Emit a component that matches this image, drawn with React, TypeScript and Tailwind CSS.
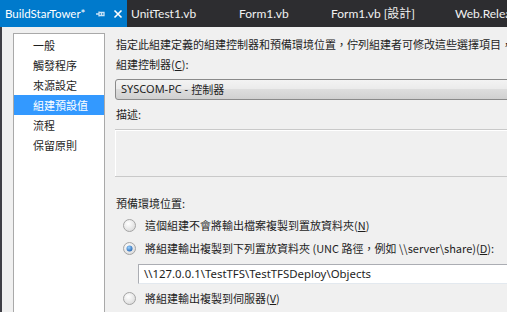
import React from 'react';

const cjk = "font-['Noto_Sans_CJK_TC','Noto_Sans',sans-serif]";

const Radio = ({ checked }: { checked?: boolean }) => (
    <svg width="13" height="13" viewBox="0 0 13 13" className="shrink-0">
        <defs>
            <radialGradient id={checked ? 'rg1' : 'rg0'} cx="40%" cy="35%" r="70%">
                <stop offset="0%" stopColor="#ffffff" />
                <stop offset="100%" stopColor="#dadada" />
            </radialGradient>
            <radialGradient id="dot" cx="40%" cy="35%" r="70%">
                <stop offset="0%" stopColor="#9ad2ff" />
                <stop offset="100%" stopColor="#2463b0" />
            </radialGradient>
        </defs>
        <circle cx="6.5" cy="6.5" r="6" fill={`url(#${checked ? 'rg1' : 'rg0'})`} stroke="#a4a4a4" strokeWidth="1" />
        {checked && <circle cx="6.5" cy="6.5" r="3" fill="url(#dot)" />}
    </svg>
);

const U = ({ children }: { children: React.ReactNode }) => <span className="underline">{children}</span>;

const App = () => {
    const tabs = [
        { label: 'UnitTest1.vb', w: 'w-[108px]' },
        { label: 'Form1.vb', w: 'w-[92px]' },
        { label: 'Form1.vb [設計]', w: 'w-[124px]' },
        { label: 'Web.Release.config', w: 'w-[120px]' },
    ];
    const items = ['一般', '觸發程序', '來源設定', '組建預設值', '流程', '保留原則'];

    return (
        <div className={`w-[507px] h-[312px] overflow-hidden bg-[#f0f0f0] flex flex-col text-[11px] text-[#1e1e1e] ${cjk}`}>
            {/* tab strip */}
            <div className="h-[27px] shrink-0 bg-[#2d2d30] flex items-stretch text-[12px] font-['Lato','Noto_Sans_CJK_TC',sans-serif] whitespace-nowrap overflow-hidden">
                <div className="w-[127px] shrink-0 bg-[#007acc] text-white flex items-center pl-[5px]">
                    <span className="w-[91px] shrink-0 text-[11.5px]">BuildStarTower*</span>
                    <svg width="10" height="10" viewBox="0 0 10 10" className="shrink-0">
                        <path d="M0 5h3M3 2.5v5M3.5 3.5h4.5v3h-4.5M5.5 3.5v3" stroke="#c9e4f7" strokeWidth="1.3" fill="none" />
                    </svg>
                    <svg width="10" height="10" viewBox="0 0 10 10" className="ml-[7px] shrink-0">
                        <path d="M1.5 1.5l7 7M8.5 1.5l-7 7" stroke="#ffffff" strokeWidth="1.6" />
                    </svg>
                </div>
                {tabs.map((t) => (
                    <div key={t.label} className={`${t.w} shrink-0 flex items-center pl-[4px] text-[#f1f1f1]`}>
                        {t.label}
                    </div>
                ))}
            </div>

            {/* body */}
            <div className="flex-1 flex border-l-2 border-[#3f3f46] min-h-0">
                <div className="ml-[11px] mt-[6px] w-[92px] shrink-0 bg-white border border-[#a9a9a9] border-b-0 pt-[1px]">
                    {items.map((it, i) => (
                        <div
                            key={it}
                            className={`h-[20px] leading-[20px] pl-[19px] ${i === 3 ? 'bg-[#3399ff] text-white' : ''}`}
                        >
                            {it}
                        </div>
                    ))}
                </div>

                <div className="ml-[10px] flex-1 flex flex-col pt-[7px] whitespace-nowrap min-w-0 overflow-hidden">
                    <div className="h-[20px] leading-[20px] pl-[1px]">指定此組建定義的組建控制器和預備環境位置，佇列組建者可修改這些選擇項目，</div>
                    <div className="h-[20px] leading-[20px] pl-[1px]">組建控制器(<U>C</U>):</div>
                    <div className="mt-[5px] h-[21px] -mr-[10px] rounded-[3px] border border-[#8a8a8a] bg-[linear-gradient(#f3f3f3_0%,#ebebeb_45%,#dddddd_50%,#d0d0d0_100%)] flex items-center pl-[5px]">
                        <span className="font-['Noto_Sans','Noto_Sans_CJK_TC',sans-serif]">SYSCOM-PC - </span>
                        <span className="ml-[3px]">控制器</span>
                    </div>
                    <div className="mt-[4px] h-[20px] leading-[20px] pl-[1px]">描述:</div>
                    <div className="mt-[5px] h-[48px] -ml-[1px] -mr-[10px] border border-[#c9c9c9] shadow-[inset_1px_1px_0_#ffffff]" />
                    <div className="mt-[16px] h-[20px] leading-[20px] pl-[1px]">預備環境位置:</div>
                    <div className="mt-[2px] h-[20px] flex items-center pl-[8px]">
                        <Radio />
                        <span className="ml-[9px]">這個組建不會將輸出檔案複製到置放資料夾(<U>N</U>)</span>
                    </div>
                    <div className="mt-[3px] h-[20px] flex items-center pl-[8px]">
                        <Radio checked />
                        <span className="ml-[9px]">
                            將組建輸出複製到下列置放資料夾 (UNC 路徑，例如 \\server\share)(<U>D</U>):
                        </span>
                    </div>
                    <div className="mt-[6px] ml-[23px] -mr-[10px] h-[20px] bg-white border border-[#abadb3] border-b-[#e3e9ef] border-r-[#e3e9ef] flex items-center pl-[5px] text-[11.4px] font-['Noto_Sans',sans-serif]">
                        \\127.0.0.1\TestTFS\TestTFSDeploy\Objects
                    </div>
                    <div className="mt-[4px] h-[20px] flex items-center pl-[8px]">
                        <Radio />
                        <span className="ml-[9px]">將組建輸出複製到伺服器(<U>V</U>)</span>
                    </div>
                </div>
            </div>
        </div>
    );
};

export default App;
